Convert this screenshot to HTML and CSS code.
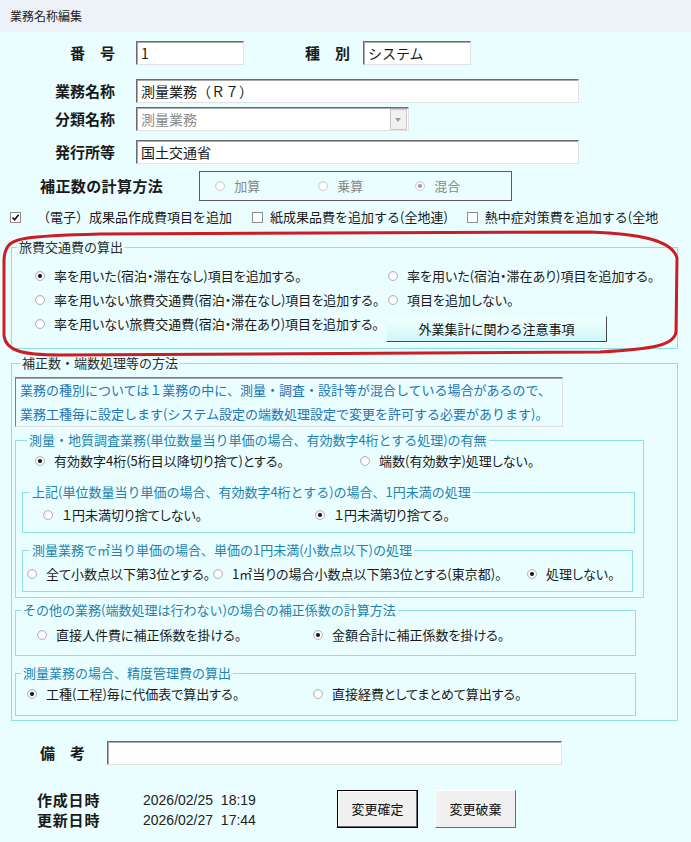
FILE: index.html
```html
<!DOCTYPE html>
<html lang="ja">
<head>
<meta charset="UTF-8">
<meta name="viewport" content="width=device-width, initial-scale=1.0">
<title>業務名称編集</title>
<link rel="stylesheet" href="styles.css">
</head>
<body>
<div id="win">
    <div class="titlebar">業務名称編集</div>
    <div class="main">
        <div class="row r1">
            <span class="lbl">番　号</span>
            <div class="txt w-no">1</div>
            <span class="lbl lbl-kind">種　別</span>
            <div class="txt w-kind">システム</div>
        </div>
        <div class="row r2">
            <span class="lbl">業務名称</span>
            <div class="txt w-long">測量業務（Ｒ７）</div>
        </div>
        <div class="row r3">
            <span class="lbl">分類名称</span>
            <div class="txt combo">測量業務<span class="drop"></span></div>
        </div>
        <div class="row r4">
            <span class="lbl">発行所等</span>
            <div class="txt w-long">国土交通省</div>
        </div>
        <div class="row r5">
            <span class="lbl lbl-calc">補正数の計算方法</span>
            <div class="calc">
                <span class="opt off c1"><i class="rd"></i>加算</span>
                <span class="opt off c2"><i class="rd"></i>乗算</span>
                <span class="opt off"><i class="rd on"></i>混合</span>
            </div>
        </div>
        <div class="checks">
            <span class="chk-item first"><i class="cb"><svg width="9" height="9" viewBox="0 0 9 9"><path d="M1.5 4.5 L3.6 6.8 L7.6 1.8" fill="none" stroke="#111" stroke-width="1.7"/></svg></i>（電子）成果品作成費項目を追加</span>
            <span class="chk-item"><i class="cb"></i>紙成果品費を追加する(全地連)</span>
            <span class="chk-item"><i class="cb"></i>熱中症対策費を追加する(全地</span>
        </div>

        <div class="travel">
            <fieldset class="grp">
                <legend>旅費交通費の算出</legend>
                <div class="travel-opts">
                    <span class="opt"><i class="rd on"></i>率を用いた(宿泊・滞在なし)項目を追加する。</span>
                    <span class="opt"><i class="rd"></i>率を用いた(宿泊・滞在あり)項目を追加する。</span>
                    <span class="opt"><i class="rd"></i>率を用いない旅費交通費(宿泊・滞在なし)項目を追加する。</span>
                    <span class="opt"><i class="rd"></i>項目を追加しない。</span>
                    <span class="opt top"><i class="rd"></i>率を用いない旅費交通費(宿泊・滞在あり)項目を追加する。</span>
                    <button class="btn-note">外業集計に関わる注意事項</button>
                </div>
            </fieldset>
            <svg class="mark" width="691" height="132" viewBox="0 0 691 132">
                <path d="M6,20 C10,8 25,6 100,4 L590,2 C640,4 672,10 677,28 L676,102 C674,115 655,119 600,122 L60,125 C20,125 6,120 4,106 L4,32 C4,26 5,22 6,20 Z" fill="none" stroke="#cc1d25" stroke-width="3"/>
            </svg>
        </div>

        <fieldset class="grp grp-round">
            <legend>補正数・端数処理等の方法</legend>
            <div class="note">
                業務の種別については１業務の中に、測量・調査・設計等が混合している場合があるので、<br>
                業務工種毎に設定します(システム設定の端数処理設定で変更を許可する必要があります)。
            </div>

            <fieldset class="grp sub sub-a">
                <legend>測量・地質調査業務(単位数量当り単価の場合、有効数字4桁とする処理)の有無</legend>
                <div class="opts opts-a">
                    <span class="opt"><i class="rd on"></i>有効数字4桁(5桁目以降切り捨て)とする。</span>
                    <span class="opt"><i class="rd"></i>端数(有効数字)処理しない。</span>
                </div>
                <fieldset class="grp sub sub-b">
                    <legend>上記(単位数量当り単価の場合、有効数字4桁とする)の場合、1円未満の処理</legend>
                    <div class="opts opts-b">
                        <span class="opt"><i class="rd"></i>１円未満切り捨てしない。</span>
                        <span class="opt"><i class="rd on"></i>１円未満切り捨てる。</span>
                    </div>
                </fieldset>
                <fieldset class="grp sub sub-c">
                    <legend>測量業務で㎡当り単価の場合、単価の1円未満(小数点以下)の処理</legend>
                    <div class="opts opts-c">
                        <span class="opt"><i class="rd"></i>全て小数点以下第3位とする。</span>
                        <span class="opt"><i class="rd"></i>1㎡当りの場合小数点以下第3位とする(東京都)。</span>
                        <span class="opt"><i class="rd on"></i>処理しない。</span>
                    </div>
                </fieldset>
            </fieldset>

            <fieldset class="grp sub sub-d">
                <legend>その他の業務(端数処理は行わない)の場合の補正係数の計算方法</legend>
                <div class="opts opts-d">
                    <span class="opt"><i class="rd"></i>直接人件費に補正係数を掛ける。</span>
                    <span class="opt"><i class="rd on"></i>金額合計に補正係数を掛ける。</span>
                </div>
            </fieldset>

            <fieldset class="grp sub sub-e">
                <legend>測量業務の場合、精度管理費の算出</legend>
                <div class="opts opts-e">
                    <span class="opt"><i class="rd on"></i>工種(工程)毎に代価表で算出する。</span>
                    <span class="opt"><i class="rd"></i>直接経費としてまとめて算出する。</span>
                </div>
            </fieldset>
        </fieldset>

        <div class="row r-memo">
            <span class="lbl lbl-memo">備　考</span>
            <div class="txt w-memo"></div>
        </div>

        <div class="foot">
            <div class="dates">
                <span class="dl">作成日時</span><span class="dv">2026/02/25&nbsp;&nbsp;18:19</span>
                <span class="dl">更新日時</span><span class="dv">2026/02/27&nbsp;&nbsp;17:44</span>
            </div>
            <button class="btn btn-ok">変更確定</button>
            <button class="btn">変更破棄</button>
        </div>
    </div>
</div>
</body>
</html>
```

FILE: styles.css
```css
html, body {
    margin: 0;
    padding: 0;
}
body {
    width: 691px;
    height: 842px;
    overflow: hidden;
    background: #eafeff;
    font: 13px/16px "Noto Sans CJK JP", "Noto Sans CJK SC", sans-serif;
    color: #1a1a1a;
}
#win {
    width: 691px;
    height: 842px;
    overflow: hidden;
    background: #eafeff;
}
.titlebar {
    height: 32px;
    padding-left: 10px;
    font-size: 12px;
    line-height: 32px;
    color: #222;
    background: linear-gradient(#eef1f8, #edf2f8);
}
.main {
    padding: 9px 13px 0 11px;
}

/* label + field rows */
.row {
    display: flex;
    align-items: center;
}
.r2 { margin-top: 14px; }
.r3 { margin-top: 4px; }
.r4 { margin-top: 9px; }
.r5 { margin-top: 7px; }
.lbl {
    width: 104px;
    margin-right: 21px;
    text-align: right;
    font-size: 15px;
    font-weight: 700;
    white-space: nowrap;
}
.lbl-kind {
    width: auto;
    margin: 0 13px 0 61px;
}
.lbl-calc {
    width: auto;
    margin: 0 36px 0 29px;
    letter-spacing: 0.4px;
}
.txt {
    box-sizing: border-box;
    height: 24px;
    padding-left: 4px;
    background: #fff;
    border: 1px solid;
    border-color: #6b6b6b #e2e2e2 #e2e2e2 #6b6b6b;
    box-shadow: inset 1px 1px 0 #a9a9a9;
    font-size: 14px;
    line-height: 22px;
    white-space: nowrap;
}
.w-no { width: 108px; }
.w-kind { width: 108px; }
.w-long { width: 443px; }
.w-memo { width: 455px; }
.combo {
    position: relative;
    width: 273px;
    color: #8a8a8a;
}
.drop {
    position: absolute;
    right: 1px;
    top: 1px;
    width: 15px;
    height: 19px;
    background: #f1f1f1;
    border: 1px solid #c9c9c9;
}
.drop::after {
    content: "";
    position: absolute;
    left: 4px;
    top: 8px;
    border: 3px solid transparent;
    border-top: 4px solid #9c9c9c;
}
.calc {
    box-sizing: border-box;
    display: flex;
    align-items: center;
    width: 313px;
    height: 30px;
    padding-left: 15px;
    border: 1px solid #5b5b5b;
}
.calc .c1 { width: 103px; }
.calc .c2 { width: 97px; }

/* radios and checkboxes */
.opt {
    display: flex;
    align-items: center;
    white-space: nowrap;
    font-feature-settings: "palt";
}
.rd {
    flex: none;
    position: relative;
    box-sizing: border-box;
    width: 10px;
    height: 10px;
    margin-right: 9px;
    border: 1px solid #b4b4b4;
    border-radius: 50%;
    background: radial-gradient(circle at 60% 60%, #fff 35%, #e2e2e2);
}
.rd.on::after {
    content: "";
    position: absolute;
    left: 2px;
    top: 2px;
    width: 4px;
    height: 4px;
    border-radius: 50%;
    background: #111;
}
.off {
    color: #888;
}
.off .rd {
    border-color: #cfcfcf;
}
.off .rd.on::after {
    background: #9a9a9a;
}
.checks {
    display: flex;
    align-items: center;
    height: 16px;
    margin-top: 8px;
    margin-left: -1px;
    white-space: nowrap;
}
.chk-item {
    display: flex;
    align-items: center;
    margin-right: 19px;
}
.chk-item.first {
    margin-right: 20px;
}
.cb {
    flex: none;
    box-sizing: border-box;
    width: 11px;
    height: 11px;
    margin-right: 7px;
    border: 1px solid #8d8d8d;
    background: #fff;
}
.first .cb {
    margin-right: 16px;
}
.cb svg {
    display: block;
}

/* group boxes */
.grp {
    margin: 0;
    padding: 0;
    min-width: 0;
    border: 1px solid #8fdde6;
}
.grp > legend {
    margin-left: 5px;
    padding: 0 2px;
    font-size: 13px;
    line-height: 16px;
    color: #2b2b2b;
}
.sub > legend {
    color: #2382ad;
}
.travel {
    position: relative;
    margin-top: 14px;
}
.travel-opts {
    display: grid;
    grid-template-columns: 353px 1fr;
    grid-template-rows: 16px 16px 26px;
    row-gap: 8px;
    padding: 13px 0 6px 23px;
}
.travel-opts .top {
    align-self: start;
}
.btn-note {
    width: 221px;
    height: 26px;
    margin-left: -2px;
    padding: 0;
    font: 13px/16px "Noto Sans CJK JP", sans-serif;
    color: #111;
    background: linear-gradient(#f4ffff, #cff6f8);
    border: 1px solid;
    border-color: #e8ffff #4a4a4a #4a4a4a #e8ffff;
}
.mark {
    position: absolute;
    left: -11px;
    top: -9px;
    pointer-events: none;
}
.grp-round {
    margin-top: 6px;
    padding: 6px 0 4px 3px;
}
.note {
    box-sizing: border-box;
    width: 548px;
    height: 50px;
    padding-left: 4px;
    border: 1px solid;
    border-color: #7d7d7d #dfdfdf #dfdfdf #7d7d7d;
    box-shadow: inset 0 1px 0 #a6a6a6;
    line-height: 24px;
    color: #2374b3;
    white-space: nowrap;
}
.opts {
    display: grid;
    align-items: center;
    height: 16px;
}
.sub-a {
    width: 629px;
    margin-top: 5px;
    padding: 5px 8px 5px 6px;
    box-sizing: border-box;
}
.opts-a {
    grid-template-columns: 325px 1fr;
    padding-left: 13px;
}
.sub-b {
    width: 613px;
    margin-top: 15px;
    padding: 7px 0 9px 20px;
    box-sizing: border-box;
}
.sub-b > legend {
    margin-left: -13px;
}
.opts-b {
    grid-template-columns: 272px 1fr;
}
.sub-c {
    width: 611px;
    margin-top: 9px;
    padding: 8px 0 9px 4px;
    box-sizing: border-box;
}
.sub-c > legend {
    margin-left: 3px;
}
.opts-c {
    grid-template-columns: 186px 314px 1fr;
}
.sub-d {
    width: 621px;
    margin-top: 4px;
    padding: 9px 0 12px 21px;
    box-sizing: border-box;
}
.sub-d > legend {
    margin-left: -16px;
}
.opts-d {
    grid-template-columns: 276px 1fr;
}
.sub-e {
    width: 621px;
    margin-top: 9px;
    padding: 5px 0 13px 11px;
    box-sizing: border-box;
}
.sub-e > legend {
    margin-left: -6px;
}
.opts-e {
    grid-template-columns: 286px 1fr;
}

/* memo + footer */
.r-memo {
    margin-top: 20px;
}
.lbl-memo {
    width: auto;
    margin: 0 22px 0 29px;
}
.foot {
    display: flex;
    align-items: flex-start;
    margin-top: 25px;
    padding-left: 26px;
}
.dates {
    display: grid;
    grid-template-columns: 106px auto;
    row-gap: 4px;
    width: 300px;
    padding-top: 2px;
}
.dl {
    font-size: 15px;
    font-weight: 700;
    letter-spacing: 0.8px;
}
.dv {
    font: 14px/16px "Liberation Sans", sans-serif;
    color: #222;
}
.btn {
    box-sizing: border-box;
    width: 81px;
    height: 38px;
    margin-right: 17px;
    padding: 0;
    font: 13px/16px "Noto Sans CJK JP", sans-serif;
    color: #111;
    background: #f0f0f0;
    border: 1px solid;
    border-color: #fff #6d6d6d #6d6d6d #fff;
}
.btn-ok {
    border: 1px solid #000;
    box-shadow: inset -1px -1px 0 #6d6d6d, inset 1px 1px 0 #fff;
}
```
